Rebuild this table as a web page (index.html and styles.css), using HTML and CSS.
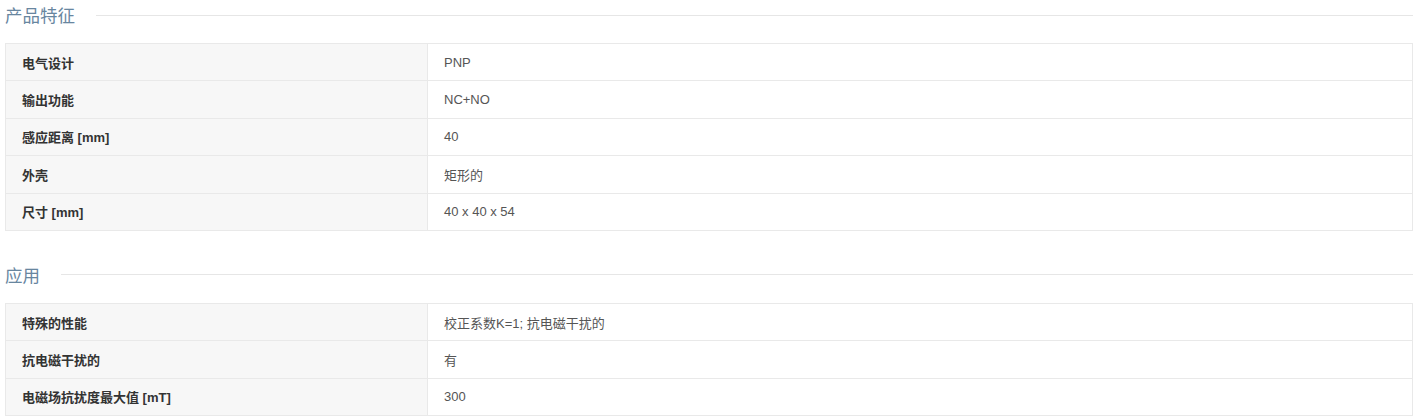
FILE: index.html
```html
<!DOCTYPE html>
<html lang="zh">
<head>
<meta charset="utf-8">
<title>产品特征</title>
<link rel="stylesheet" href="styles.css">
</head>
<body>
<div class="page">
  <section class="group">
    <div class="group-head"><h2 class="group-title">产品特征</h2><span class="group-line"></span></div>
    <table class="spec">
      <tr><th>电气设计</th><td>PNP</td></tr>
      <tr><th>输出功能</th><td>NC+NO</td></tr>
      <tr><th>感应距离 [mm]</th><td>40</td></tr>
      <tr><th>外壳</th><td>矩形的</td></tr>
      <tr><th>尺寸 [mm]</th><td>40 x 40 x 54</td></tr>
    </table>
  </section>
  <section class="group">
    <div class="group-head"><h2 class="group-title">应用</h2><span class="group-line"></span></div>
    <table class="spec">
      <tr><th>特殊的性能</th><td>校正系数K=1; 抗电磁干扰的</td></tr>
      <tr><th>抗电磁干扰的</th><td>有</td></tr>
      <tr><th>电磁场抗扰度最大值 [mT]</th><td>300</td></tr>
    </table>
  </section>
</div>
</body>
</html>
```
FILE: styles.css
```css
html, body {
  margin: 0;
  padding: 0;
  background: #fff;
}
.page {
  padding: 0 6px 0 5px;
  font-family: "Liberation Sans", "Noto Sans CJK SC", sans-serif;
  font-size: 13px;
  color: #555;
}
.group + .group {
  margin-top: 29px;
}
.group-head {
  display: flex;
  align-items: center;
  height: 30px;
}
.group-title {
  margin: 0;
  font-size: 17.5px;
  font-weight: normal;
  color: #68869f;
  font-family: "Noto Sans CJK SC", sans-serif;
  line-height: 30px;
}
.group-line {
  flex: 1;
  height: 1px;
  background: #e6e6e6;
  margin-left: 21px;
}
.spec {
  width: 100%;
  margin-top: 13px;
  border-collapse: collapse;
  border: 1px solid #e9e9e9;
}
.spec th, .spec td {
  border: 1px solid #e9e9e9;
  height: 36.4px;
  padding: 0 16px;
  text-align: left;
  vertical-align: middle;
}
.spec th {
  width: 389px;
  background: #f7f7f7;
  font-weight: bold;
  color: #333;
}
.spec td {
  background: #fff;
  color: #555;
}
```
